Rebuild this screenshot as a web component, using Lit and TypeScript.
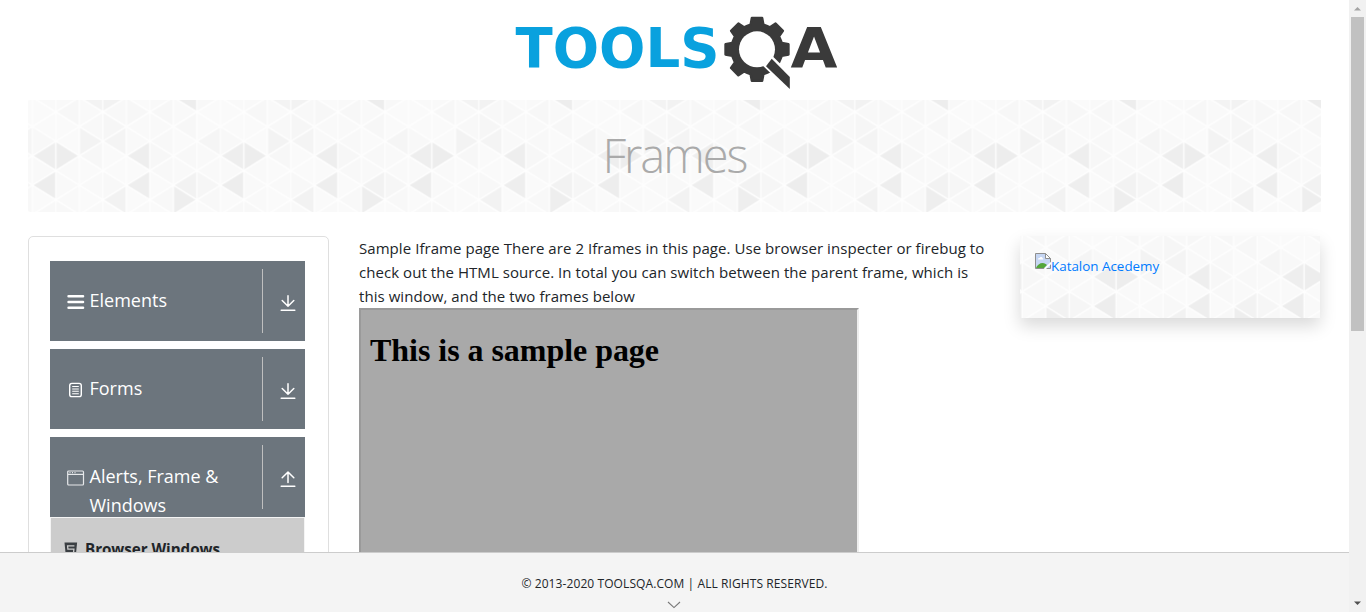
import { LitElement, html, svg, css } from "lit";
import { customElement, property } from "lit/decorators.js";

const COL = 23.5;
const ROW = 29.3;
const COLS = 8;
const ROWS = 6;

// Shades keyed by "column,half-row,direction"; half-rows count from the tile's top vertex.
const SHADES: Record<string, string> = {
  "2,0,L": "#f3f3f3", "3,0,R": "#f2f2f2", "6,0,L": "#ededed",
  "1,1,L": "#f7f7f7", "5,1,L": "#f7f7f7", "4,1,R": "#f7f7f7",
  "3,2,R": "#f6f6f6", "6,2,L": "#f7f7f7",
  "2,3,R": "#f3f3f3", "3,3,L": "#f4f4f4", "7,3,L": "#f5f5f5",
  "0,4,L": "#eeeeee", "1,4,R": "#ededed", "4,4,L": "#eeeeee",
  "5,4,R": "#f7f7f7", "2,4,L": "#f7f7f7",
  "0,6,L": "#ededed", "4,6,L": "#eeeeee", "6,6,L": "#f2f2f2",
  "7,6,R": "#f6f6f6", "6,7,R": "#eeeeee", "3,7,L": "#f2f2f2",
};
const LIGHT = ["#f9f9f9", "#f8f8f8", "#fafafa", "#f9f9f9", "#fafafa"];

@customElement("triangle-pattern")
class TrianglePattern extends LitElement {
  @property({ type: Number }) dx = 0;
  @property({ type: Number }) dy = 0;
  static styles = css`
    :host { display: block; overflow: hidden; min-width: 0; min-height: 0; contain: size; }
    svg { display: block; width: 100%; height: 100%; }
  `;
  render() {
    const shapes = [];
    for (let c = 0; c < COLS; c++) {
      for (let h = -1; h <= ROWS * 2 + 1; h++) {
        const dir = (c + h) % 2 === 0 ? "L" : "R";
        const y = (h * ROW) / 2;
        const x0 = c * COL;
        const x1 = x0 + COL;
        const apex = dir === "L" ? x0 : x1;
        const base = dir === "L" ? x1 : x0;
        const k = (h + ROWS * 2) % (ROWS * 2);
        const fill = SHADES[`${c},${k},${dir}`] ?? LIGHT[(c * 3 + k * 7 + ((c * k) % 3)) % 5];
        shapes.push(svg`<polygon points="${apex},${y} ${base},${y - ROW / 2} ${base},${y + ROW / 2}" fill=${fill}></polygon>`);
      }
    }
    return html`<svg aria-hidden="true">
      <defs>
        <pattern id="tri" width=${COL * COLS} height=${ROW * ROWS} patternUnits="userSpaceOnUse"
          patternTransform="translate(${this.dx} ${this.dy})">
          <g stroke="#fefefe" stroke-width="1.3" stroke-linejoin="round">${shapes}</g>
        </pattern>
      </defs>
      <rect width="100%" height="100%" fill="url(#tri)"></rect>
    </svg>`;
  }
}

const gear = () => {
  const pts: string[] = [];
  const at = (r: number, deg: number) => {
    const a = (deg * Math.PI) / 180;
    pts.push(`${(241 + r * Math.cos(a)).toFixed(2)},${(33.4 + r * Math.sin(a)).toFixed(2)}`);
  };
  for (let i = 0; i < 8; i++) {
    const m = i * 45;
    at(25.6, m - 14.5);
    if (i !== 1) {
      at(31.9, m - 9.3);
      at(31.9, m + 9.3);
    }
    at(25.6, m + 14.5);
    at(25.4, m + 22.5);
  }
  return pts.join(" ");
};

@customElement("tools-logo")
class ToolsLogo extends LitElement {
  static styles = css`
    :host { display: block; }
    svg { display: block; overflow: visible; }
    .word { font: bold 56px "DejaVu Sans", sans-serif; }
  `;
  render() {
    return html`<svg width="322" height="76" viewBox="0 0 322 76">
      <text class="word" x="-0.5" y="51" textLength="204" lengthAdjust="spacingAndGlyphs" fill="#09a1de">TOOLS</text>
      <polygon points=${gear()} fill="#3a3a3a" stroke="#3a3a3a" stroke-width="2.4" stroke-linejoin="round"></polygon>
      <circle cx="241" cy="33.3" r="18" fill="#fff"></circle>
      <path d="M256 42.5 L275 61 V74 L249 49 Z" fill="#fff" stroke="#fff" stroke-width="4"></path>
      <path d="M255.7 42.7 L273.8 61 V73 L250 50.3 Z" fill="#3a3a3a"></path>
      <text class="word" x="274.5" y="51" textLength="47" lengthAdjust="spacingAndGlyphs" fill="#3a3a3a">A</text>
    </svg>`;
  }
}

const icons = {
  menu: svg`<g stroke="#fff" stroke-width="2.6" stroke-linecap="round"><path d="M1.6 3.2h14.4M1.6 9h14.4M1.6 14.8h14.4"></path></g>`,
  form: svg`<g fill="none" stroke="#fff" stroke-width="1.4"><rect x="2.7" y="2.4" width="11.6" height="13.2" rx="2.2"></rect><path d="M5.2 5.5h6.6M5.2 8h6.6M5.2 10.3h6.6M5.2 12.7h6.6" stroke-width="1.1"></path></g>`,
  window: svg`<g fill="none" stroke="#e6e8ea" stroke-width="1.2"><rect x="0.7" y="2" width="15.8" height="14" rx="1"></rect><path d="M1 5.4h15.5"></path><path d="M2.5 3.7h1M5 3.7h1M7.5 3.7h1"></path></g>`,
};

@customElement("nav-group")
class NavGroup extends LitElement {
  @property() label = "";
  @property() icon: keyof typeof icons = "menu";
  @property({ type: Boolean }) open = false;
  static styles = css`
    :host { display: flex; flex: none; box-sizing: border-box; height: 80px; padding: 8px 9px 0 17px; background: #6c757d; color: #fff; }
    .icon { flex: none; width: 18px; height: 18px; margin-top: 24px; }
    .label { flex: 1; padding: 17px 0 0 4.5px; font-size: 18px; line-height: 29px; }
    .toggle { flex: none; box-sizing: border-box; width: 34px; height: 64px; border-left: 1px solid #bfbfbf; padding: 26px 0 0 16.5px; }
    svg { display: block; }
  `;
  render() {
    return html`<svg class="icon" viewBox="0 0 18 18">${icons[this.icon]}</svg>
      <div class="label">${this.label}</div>
      <div class="toggle"><svg width="16" height="17" fill="none" stroke="#fff" stroke-width="1.5" stroke-linecap="round" stroke-linejoin="round">
        <path d=${this.open ? "M8 11.5V1M2.2 6.8L8 1l5.8 5.8" : "M8 .8v10.4M2.2 5.5L8 11.3l5.8-5.8"}></path>
        <path d="M1.2 15.2h13.6"></path></svg></div>`;
  }
}

@customElement("app-root")
class AppRoot extends LitElement {
  static styles = css`
    :host { display: grid; grid-template-columns: 1fr 17px; height: 612px; overflow: hidden; background: #fff; color: #212529;
      font-family: "Open Sans", "Noto Sans", sans-serif; }
    svg { display: block; }
    .page { display: flex; flex-direction: column; min-width: 0; height: 612px; }
    .view { flex: 1; min-height: 0; overflow: hidden; }
    .header { display: flex; justify-content: center; box-sizing: border-box; height: 100px; padding: 16px 0 0 4px; }
    .banner { display: grid; height: 112px; margin: 0 28px; }
    .banner > *, .promo > * { grid-area: 1 / 1; }
    h1 { margin: 0; align-self: center; text-align: center; font-size: 47px; font-weight: 300; line-height: 58px; letter-spacing: -2px; padding-bottom: 3px; color: #aaa; }
    .columns { display: grid; grid-template-columns: 301px 631px 300px; column-gap: 30px; padding: 24px 28px 0; align-items: start; }
    .side { box-sizing: border-box; border: 1px solid #dfdfdf; border-radius: 5px; padding: 24px 23px 0 21px; height: 420px; display: flex; flex-direction: column; gap: 8px; }
    .sub { flex: none; margin-top: -8px; border: 1px solid #f4f4f4; background: #ccc; height: 100px; display: flex; gap: 7px; padding: 18px 0 0 13px; font-size: 15.2px; font-weight: 700; line-height: 26px; letter-spacing: -0.05px; }
    .sub svg { margin-top: 5.5px; }
    .intro { font-size: 15px; line-height: 24px; letter-spacing: 0.057px; white-space: nowrap; }
    .frame { box-sizing: border-box; width: 500px; height: 350px; border: 2px solid; border-color: #9a9a9a #eee #eee #9a9a9a; background: #a9a9a9; padding: 22px 9px 0; }
    h2 { margin: 0; color: #000; font: bold 32px/37px "Liberation Serif", serif; letter-spacing: -0.04px; }
    .promo { display: grid; height: 82px; box-shadow: 0 8px 16px rgba(0, 0, 0, 0.15); }
    .link { display: flex; padding: 17px 0 0 15px; color: #007bff; font-size: 13.4px; line-height: 26px; }
    .footer { flex: none; box-sizing: border-box; height: 60px; border-top: 1px solid #ccc; background: #f4f4f4; display: flex; flex-direction: column; align-items: center; padding-top: 21px; font-size: 12px; line-height: 20px; letter-spacing: 0.09px; }
    .footer svg { margin: 7px 2px 0 0; }
    .scroll { display: flex; flex-direction: column; align-items: center; background: #f1f1f1; height: 612px; }
    .thumb { width: 13px; height: 314px; background: #c1c1c1; }
    .down { margin-top: auto; }
  `;
  render() {
    return html`<div class="page">
        <div class="view">
          <div class="header"><tools-logo></tools-logo></div>
          <div class="banner"><triangle-pattern dx="4.4" dy="-2.6"></triangle-pattern><h1>Frames</h1></div>
          <div class="columns">
            <div class="side">
              <nav-group label="Elements" icon="menu"></nav-group>
              <nav-group label="Forms" icon="form"></nav-group>
              <nav-group label="Alerts, Frame &amp; Windows" icon="window" open></nav-group>
              <div class="sub">
                <svg width="14" height="16"><path d="M.5.5h12.6l-1.2 12.3-5.1 2.4-5.1-2.4z" fill="#3b3f43"></path><path d="M10.4 3.8H3.6l.3 3.4h6l-.4 3.8-2.7.9-2.6-.9" fill="none" stroke="#ccc" stroke-width="1.3"></path></svg>
                <span>Browser Windows</span>
              </div>
            </div>
            <div class="main">
              <div class="intro">Sample Iframe page There are 2 Iframes in this page. Use browser inspecter or firebug to<br>check out the HTML source. In total you can switch between the parent frame, which is<br>this window, and the two frames below</div>
              <div class="frame"><h2>This is a sample page</h2></div>
            </div>
            <div class="promo"><triangle-pattern dx="72.7" dy="-17.6"></triangle-pattern>
              <div class="link"><svg width="16" height="16">
                <path d="M.5.5h10l5 5v10H.5z" fill="#c6d6f3" stroke="#8f8f8f"></path>
                <path d="M10.5.5v5h5z" fill="#fff" stroke="#8f8f8f"></path>
                <path d="M3 6.5c0-1.5 1.3-1.7 1.7-1.5.4-1.8 2.8-1.2 2.8.2 1.2 0 1 1.3.5 1.3z" fill="#fff"></path>
                <path d="M1 15c1-3 4-5 6.5-5s3.2 1 4.5 2l-3 3z" fill="#54a63a"></path>
                <path d="M8.6 16L16 8.8v2.4L11 16z" fill="#fff"></path>
              </svg><span>Katalon Acedemy</span></div>
            </div>
          </div>
        </div>
        <div class="footer"><span>© 2013-2020 TOOLSQA.COM | ALL RIGHTS RESERVED.</span>
          <svg width="14" height="8" fill="none" stroke="#777" stroke-width="1.1"><path d="M1 1l6 5.6L13 1"></path></svg></div>
      </div>
      <div class="scroll">
        <svg width="17" height="17"><path d="M5 10.5h7L8.5 7z" fill="#a3a3a3"></path></svg>
        <div class="thumb"></div>
        <svg class="down" width="17" height="17"><path d="M5 6.5h7L8.5 10z" fill="#505050"></path></svg>
      </div>`;
  }
}
